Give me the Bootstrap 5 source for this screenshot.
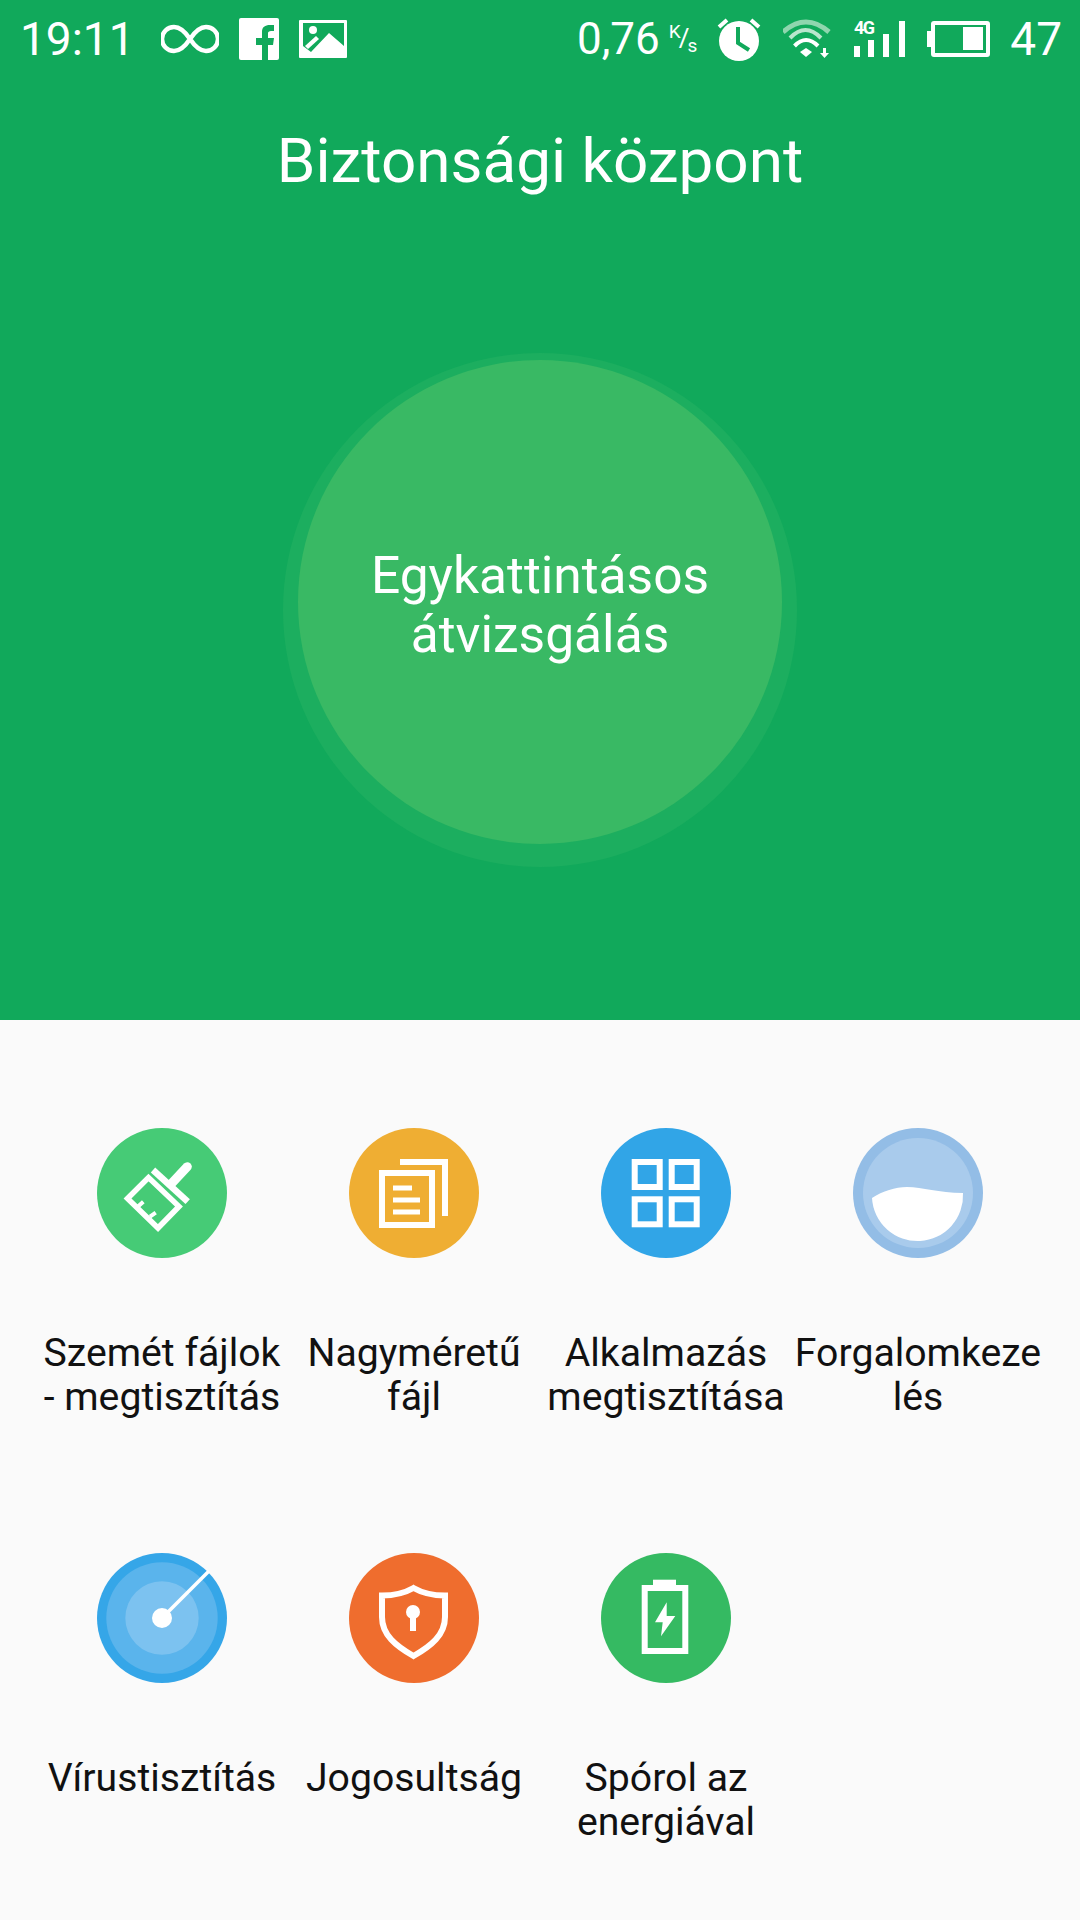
<!DOCTYPE html>
<html lang="hu">
<head>
    <meta charset="UTF-8">
    <meta name="viewport" content="width=device-width, initial-scale=1.0">
    <title>Biztonsági központ</title>
    <link href="https://cdn.jsdelivr.net/npm/bootstrap@5.3.0/dist/css/bootstrap.min.css" rel="stylesheet">
    <style>
        body { background-color: #fafafa; font-family: Roboto, "Noto Sans", sans-serif; }
        .hero-panel { background-color: #11a95b; height: 1020px; }
        .status-strip { height: 78px; padding: 0 18px 0 20px; font-size: 46px; line-height: 78px; }
        .status-strip svg { display: block; flex: none; }
        .gap-loop { margin-left: 26px; }
        .gap-fb { margin-left: 20px; }
        .gap-pic { margin-left: 20px; }
        .gap-alarm { margin-left: 17px; }
        .gap-wifi { margin-left: 21px; }
        .gap-signal { margin-left: 23px; }
        .gap-batt { margin-left: 22px; }
        .gap-level { margin-left: 20px; }
        .speed-now { font-size: 44px; }
        .speed-unit { font-size: 19px; line-height: 60px; margin-left: 9px; padding-right: 2px; white-space: nowrap; }
        .speed-unit .unit-up { vertical-align: 8px; }
        .speed-unit .unit-slash { font-size: 26px; vertical-align: -1px; margin: 0 -2px; }
        .speed-unit .unit-down { vertical-align: -6px; }
        .hero-title { font-size: 62px; line-height: 70px; margin-top: 48px; }
        .scan-button { width: 484px; height: 484px; margin-top: 164px; padding-top: 6px; background-color: #39b964; box-shadow: 0 8px 0 15px #1cae5f; font-size: 51.500px; line-height: 59px; }
        .tools-grid { height: 900px; padding: 108px 36px 0; }
        .tool-cell { height: 425px; color: #111; font-size: 39.200px; line-height: 44px; white-space: nowrap; }
        .tool-icon { width: 130px; height: 130px; display: block; margin-bottom: 73px; }
    </style>
</head>
<body>
    <div class="hero-panel text-white d-flex flex-column align-items-center">
        <div class="status-strip d-flex align-items-center w-100">
            <span>19:11</span>
            <svg class="gap-loop" width="58" height="32" viewBox="0 0 58 32" fill="none" stroke="#fff" stroke-width="4.500"><path d="M29 16C23 7 18 4 13 4a12 12 0 0 0 0 24c5 0 10-3 16-12s11-12 16-12a12 12 0 0 1 0 24c-5 0-10-3-16-12z"/></svg>
            <svg class="gap-fb" width="40" height="42" viewBox="0 0 40 42"><rect width="40" height="42" rx="2" fill="#fff"/><path d="M23 42V27h-6v-7h6v-6c0-5 3-7 8-7h4v6h-3c-2 0-3 1-3 2v5h6l-1 7h-5v15z" fill="#11a95b"/></svg>
            <svg class="gap-pic" width="48" height="38" viewBox="0 0 48 38"><rect width="48" height="38" rx="1" fill="#fff"/><path d="M4 3H45V26L30 13 12 32 4 26z" fill="#11a95b"/><circle cx="14" cy="10" r="4" fill="#fff"/><path d="M6 26l11-10 3 3-11 10z" fill="#fff"/></svg>
            <span class="speed-now ms-auto">0,76</span>
            <span class="speed-unit"><span class="unit-up">K</span><span class="unit-slash">/</span><span class="unit-down">s</span></span>
            <svg class="gap-alarm" width="46" height="46" viewBox="0 0 46 46"><circle cx="23" cy="25" r="20" fill="#fff"/><path d="M22 11v16l11 7" fill="none" stroke="#11a95b" stroke-width="4"/><path d="M3 11l8-7M43 11l-8-7" stroke="#fff" stroke-width="4"/></svg>
            <svg class="gap-wifi" width="48" height="40" viewBox="0 0 48 40" fill="none"><path d="M0 13Q23 -7 46 13" stroke="#8fd6ae" stroke-width="5"/><path d="M7 19Q22.500 3 38 19" stroke="#b9e6cd" stroke-width="4"/><path d="M11.500 27Q23 15 35 27" stroke="#fff" stroke-width="4"/><path d="M17 33l6-4 6 4-6 5z" fill="#fff"/><path d="M41.500 29v6" stroke="#fff" stroke-width="3"/><path d="M37 34h9l-4.500 5z" fill="#fff"/></svg>
            <svg class="gap-signal" width="51" height="38" viewBox="0 0 51 38"><text x="0" y="14" fill="#fff" font-family="Roboto" font-size="18" font-weight="700" textLength="21">4G</text><path d="M0 26h6v11H0zM14 20h6v17h-6zM29 14h6v23h-6zM45 1h6v36h-6z" fill="#fff"/></svg>
            <svg class="gap-batt" width="63" height="38" viewBox="0 0 63 38"><rect x="0" y="11" width="4" height="16" fill="#fff"/><rect x="6" y="3" width="55" height="32" rx="1" fill="none" stroke="#fff" stroke-width="4"/><rect x="36" y="7" width="20" height="23" fill="#fff"/></svg>
            <span class="gap-level">47</span>
        </div>
        <div class="hero-title">Biztonsági központ</div>
        <div class="scan-button rounded-circle d-flex align-items-center justify-content-center text-center">Egykattintásos<br>átvizsgálás</div>
    </div>

    <div class="tools-grid overflow-hidden">
        <div class="row g-0">
            <div class="col-3 tool-cell d-flex flex-column align-items-center text-center">
                <svg class="tool-icon" viewBox="0 0 130 130"><circle cx="65" cy="65" r="65" fill="#46cb76"/><g fill="none" stroke="#fff"><path d="M30.500 70.500L51.500 49.500 82 78.500 61 100z" stroke-width="5.500"/><path d="M56 42L90.700 73.700" stroke-width="6.500"/><path d="M74.700 55.300L90.300 38.700" stroke-width="9" stroke-linecap="round"/><path d="M40.700 78.700l5.600-5M53 88.700l5.700-4" stroke-width="4"/></g></svg>
                Szemét fájlok<br>- megtisztítás
            </div>
            <div class="col-3 tool-cell d-flex flex-column align-items-center text-center">
                <svg class="tool-icon" viewBox="0 0 130 130"><circle cx="65" cy="65" r="65" fill="#efae33"/><g fill="none" stroke="#fff"><path d="M51 34h45v54" stroke-width="6"/><rect x="33" y="45" width="50" height="52" stroke-width="6"/><path d="M44 60h19M44 72h27M44 84h27" stroke-width="5"/></g></svg>
                Nagyméretű<br>fájl
            </div>
            <div class="col-3 tool-cell d-flex flex-column align-items-center text-center">
                <svg class="tool-icon" viewBox="0 0 130 130"><circle cx="65" cy="65" r="65" fill="#31a5e7"/><g fill="none" stroke="#fff" stroke-width="6"><rect x="33.700" y="34" width="25" height="25"/><rect x="70.700" y="34" width="25" height="25"/><rect x="33.700" y="71.300" width="25" height="25"/><rect x="70.700" y="71.300" width="25" height="25"/></g></svg>
                Alkalmazás<br>megtisztítása
            </div>
            <div class="col-3 tool-cell d-flex flex-column align-items-center text-center">
                <svg class="tool-icon" viewBox="0 0 130 130"><circle cx="65" cy="65" r="65" fill="#93bde6"/><circle cx="65" cy="65" r="55" fill="#a9cbec"/><path d="M19 70C30 63 42 59 54 59C70 59 85 65 110 65A45 45 0 0 1 19 70Z" fill="#fff"/></svg>
                Forgalomkeze<br>lés
            </div>
            <div class="col-3 tool-cell d-flex flex-column align-items-center text-center">
                <svg class="tool-icon" viewBox="0 0 130 130"><circle cx="65" cy="65" r="65" fill="#35a6e8"/><circle cx="65" cy="65" r="55.700" fill="#5ab4ec"/><circle cx="65" cy="65" r="36.700" fill="#7cc2f0"/><path d="M65 65L112 18" stroke="#fff" stroke-width="3.500"/><circle cx="65" cy="65" r="10" fill="#fff"/></svg>
                Vírustisztítás
            </div>
            <div class="col-3 tool-cell d-flex flex-column align-items-center text-center">
                <svg class="tool-icon" viewBox="0 0 130 130"><circle cx="65" cy="65" r="65" fill="#ef6d2e"/><path d="M64.500 35C54 41 44 42.500 33 42.500V64C33 82 47 93 64.500 103C82 93 96 82 96 64V42.500C85 42.500 75 41 64.500 35Z" fill="none" stroke="#fff" stroke-width="6"/><circle cx="64" cy="59" r="7" fill="#fff"/><rect x="61" y="60" width="6" height="18" fill="#fff"/></svg>
                Jogosultság
            </div>
            <div class="col-3 tool-cell d-flex flex-column align-items-center text-center">
                <svg class="tool-icon" viewBox="0 0 130 130"><circle cx="65" cy="65" r="65" fill="#35ba62"/><rect x="43.700" y="35" width="40.600" height="63" fill="none" stroke="#fff" stroke-width="6"/><rect x="52" y="26.700" width="23" height="6" fill="#fff"/><path d="M65.700 49.300L54 69.300H61.700L60 83.300L74.300 63H65.700z" fill="#fff"/></svg>
                Spórol az<br>energiával
            </div>
        </div>
    </div>

    <script src="https://cdn.jsdelivr.net/npm/bootstrap@5.3.0/dist/js/bootstrap.bundle.min.js"></script>
</body>
</html>
